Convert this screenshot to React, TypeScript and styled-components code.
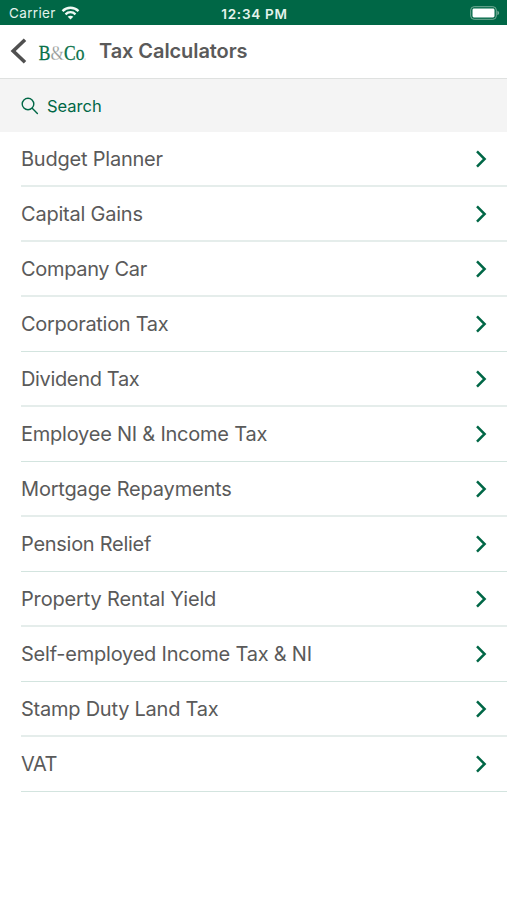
import React from "react";
import styled, { createGlobalStyle } from "styled-components";

const green = "#006746";

const GlobalStyle = createGlobalStyle`
  * { box-sizing: border-box; }
  body {
    margin: 0;
    background: #fff;
    font-family: Inter, "Liberation Sans", sans-serif;
    color: #5a5a5a;
  }
`;

const Screen = styled.main`
  min-height: 900px;
  display: flex;
  flex-direction: column;
  background: #fff;
`;

const StatusBar = styled.div`
  height: 25px;
  padding: 2px 7px 0 9px;
  display: grid;
  grid-template-columns: 1fr auto 1fr;
  align-items: center;
  background: ${green};
  color: #e4f3ec;
  font-size: 13.5px;
  line-height: 20px;
`;

const Carrier = styled.div`
  display: flex;
  align-items: center;
  gap: 5px;
  padding-bottom: 1px;
  letter-spacing: 0.35px;
`;

const Clock = styled.div`
  font-weight: 600;
  font-size: 13.5px;
  letter-spacing: 0.75px;
`;

const BatterySlot = styled.div`
  display: flex;
  justify-content: flex-end;
  padding-bottom: 1px;
`;

const Header = styled.header`
  height: 54px;
  padding-left: 10px;
  display: flex;
  align-items: center;
  border-bottom: 1px solid #dfe1e0;
`;

const BackButton = styled.button`
  width: 28px;
  height: 52px;
  padding: 0 0 1px;
  border: 0;
  background: none;
  display: flex;
  align-items: center;
`;

const Brand = styled.div`
  width: 61px;
  display: flex;
  align-items: center;
`;

const Title = styled.h1`
  margin: 0;
  padding-bottom: 1px;
  font-size: 20px;
  font-weight: 600;
  line-height: 52px;
  letter-spacing: -0.08px;
`;

const SearchBar = styled.div`
  height: 53px;
  padding: 0 0 0 21px;
  display: flex;
  align-items: center;
  gap: 8px;
  background: #f4f4f4;
  color: ${green};
  font-size: 16.5px;
  letter-spacing: -0.02px;
`;

const List = styled.ul`
  margin: 0;
  padding: 0 0 0 21px;
  list-style: none;
`;

const Row = styled.li`
  height: 55px;
  display: flex;
  border-bottom: 1px solid #d3e4df;

  &:nth-child(odd), &:nth-child(2) {
    border-bottom: 2px solid #e5edeb;
  }
`;

const RowLink = styled.a<{ $spacing: number }>`
  flex: 1;
  height: 54px;
  padding-right: 20px;
  display: flex;
  align-items: center;
  justify-content: space-between;
  font-size: 20px;
  white-space: nowrap;
  letter-spacing: ${(p) => p.$spacing}px;
`;

const items: [string, number][] = [
  ["Budget Planner", -0.22],
  ["Capital Gains", -0.22],
  ["Company Car", -0.33],
  ["Corporation Tax", -0.3],
  ["Dividend Tax", -0.35],
  ["Employee NI & Income Tax", -0.23],
  ["Mortgage Repayments", -0.18],
  ["Pension Relief", -0.28],
  ["Property Rental Yield", -0.16],
  ["Self-employed Income Tax & NI", -0.22],
  ["Stamp Duty Land Tax", -0.24],
  ["VAT", -0.5],
];

const Wifi = () => (
  <svg width="19" height="14" viewBox="-.5 0 19 14" fill="none" stroke="#f0faf5" strokeWidth="2.3">
    <path d="M1 5.1C5.5.6 12.5.6 17 5.1" />
    <path d="M4 8.3C6.9 5.5 11.1 5.5 14 8.3" />
    <path d="M9 13.6 6.2 10.7C7.8 9.3 10.2 9.3 11.8 10.7Z" fill="#f0faf5" stroke="none" />
  </svg>
);

const Battery = () => (
  <svg width="30" height="14" viewBox="0 0 30 14">
    <rect x=".7" y=".7" width="25.6" height="12.6" rx="3.4" fill="none" stroke="#76ad98" strokeWidth="1" />
    <rect x="2.5" y="2.5" width="22" height="9" rx="1.4" fill="#fff" />
    <path d="M27.4 4.8c2.3.7 2.3 3.7 0 4.4Z" fill="#76ad98" />
  </svg>
);

const BackIcon = () => (
  <svg width="17" height="26" viewBox="0 0 17 26" fill="none" stroke="#505050" strokeWidth="3.6">
    <path d="M15 1.8 3.2 13 15 24.2" />
  </svg>
);

const Logo = () => (
  <svg width="50" height="26" viewBox="0 0 50 26">
    <text
      x="0.8"
      y="20.5"
      fontFamily="'Liberation Serif', serif"
      fontSize="21.5"
      fill="#087149"
      stroke="#087149"
      strokeWidth=".3"
      textLength="45.6"
      lengthAdjust="spacingAndGlyphs"
    >
      B<tspan fill="#8d9290" stroke="#fff">&amp;</tspan>Co
    </text>
    <circle cx="47.1" cy="20" r=".6" fill="#9bb8aa" />
  </svg>
);

const SearchIcon = () => (
  <svg width="18" height="18" viewBox="0 0 18 18" fill="none" stroke={green} strokeWidth="1.4">
    <circle cx="7" cy="7" r="5.8" />
    <path d="m11.2 11.2 5.2 5.2" strokeLinecap="round" />
  </svg>
);

const Chevron = () => (
  <svg width="12" height="18" viewBox="0 0 12 18" fill="none" stroke={green} strokeWidth="2.5">
    <path d="M2 1.4 9.6 9 2 16.6" />
  </svg>
);

export default function App() {
  return (
    <>
      <GlobalStyle />
      <Screen>
        <StatusBar>
          <Carrier>Carrier <Wifi /></Carrier>
          <Clock>12:34 PM</Clock>
          <BatterySlot><Battery /></BatterySlot>
        </StatusBar>
        <Header>
          <BackButton aria-label="Back"><BackIcon /></BackButton>
          <Brand><Logo /></Brand>
          <Title>Tax Calculators</Title>
        </Header>
        <SearchBar><SearchIcon />Search</SearchBar>
        <List>
          {items.map(([label, spacing]) => (
            <Row key={label}>
              <RowLink $spacing={spacing}>{label}<Chevron /></RowLink>
            </Row>
          ))}
        </List>
      </Screen>
    </>
  );
}
